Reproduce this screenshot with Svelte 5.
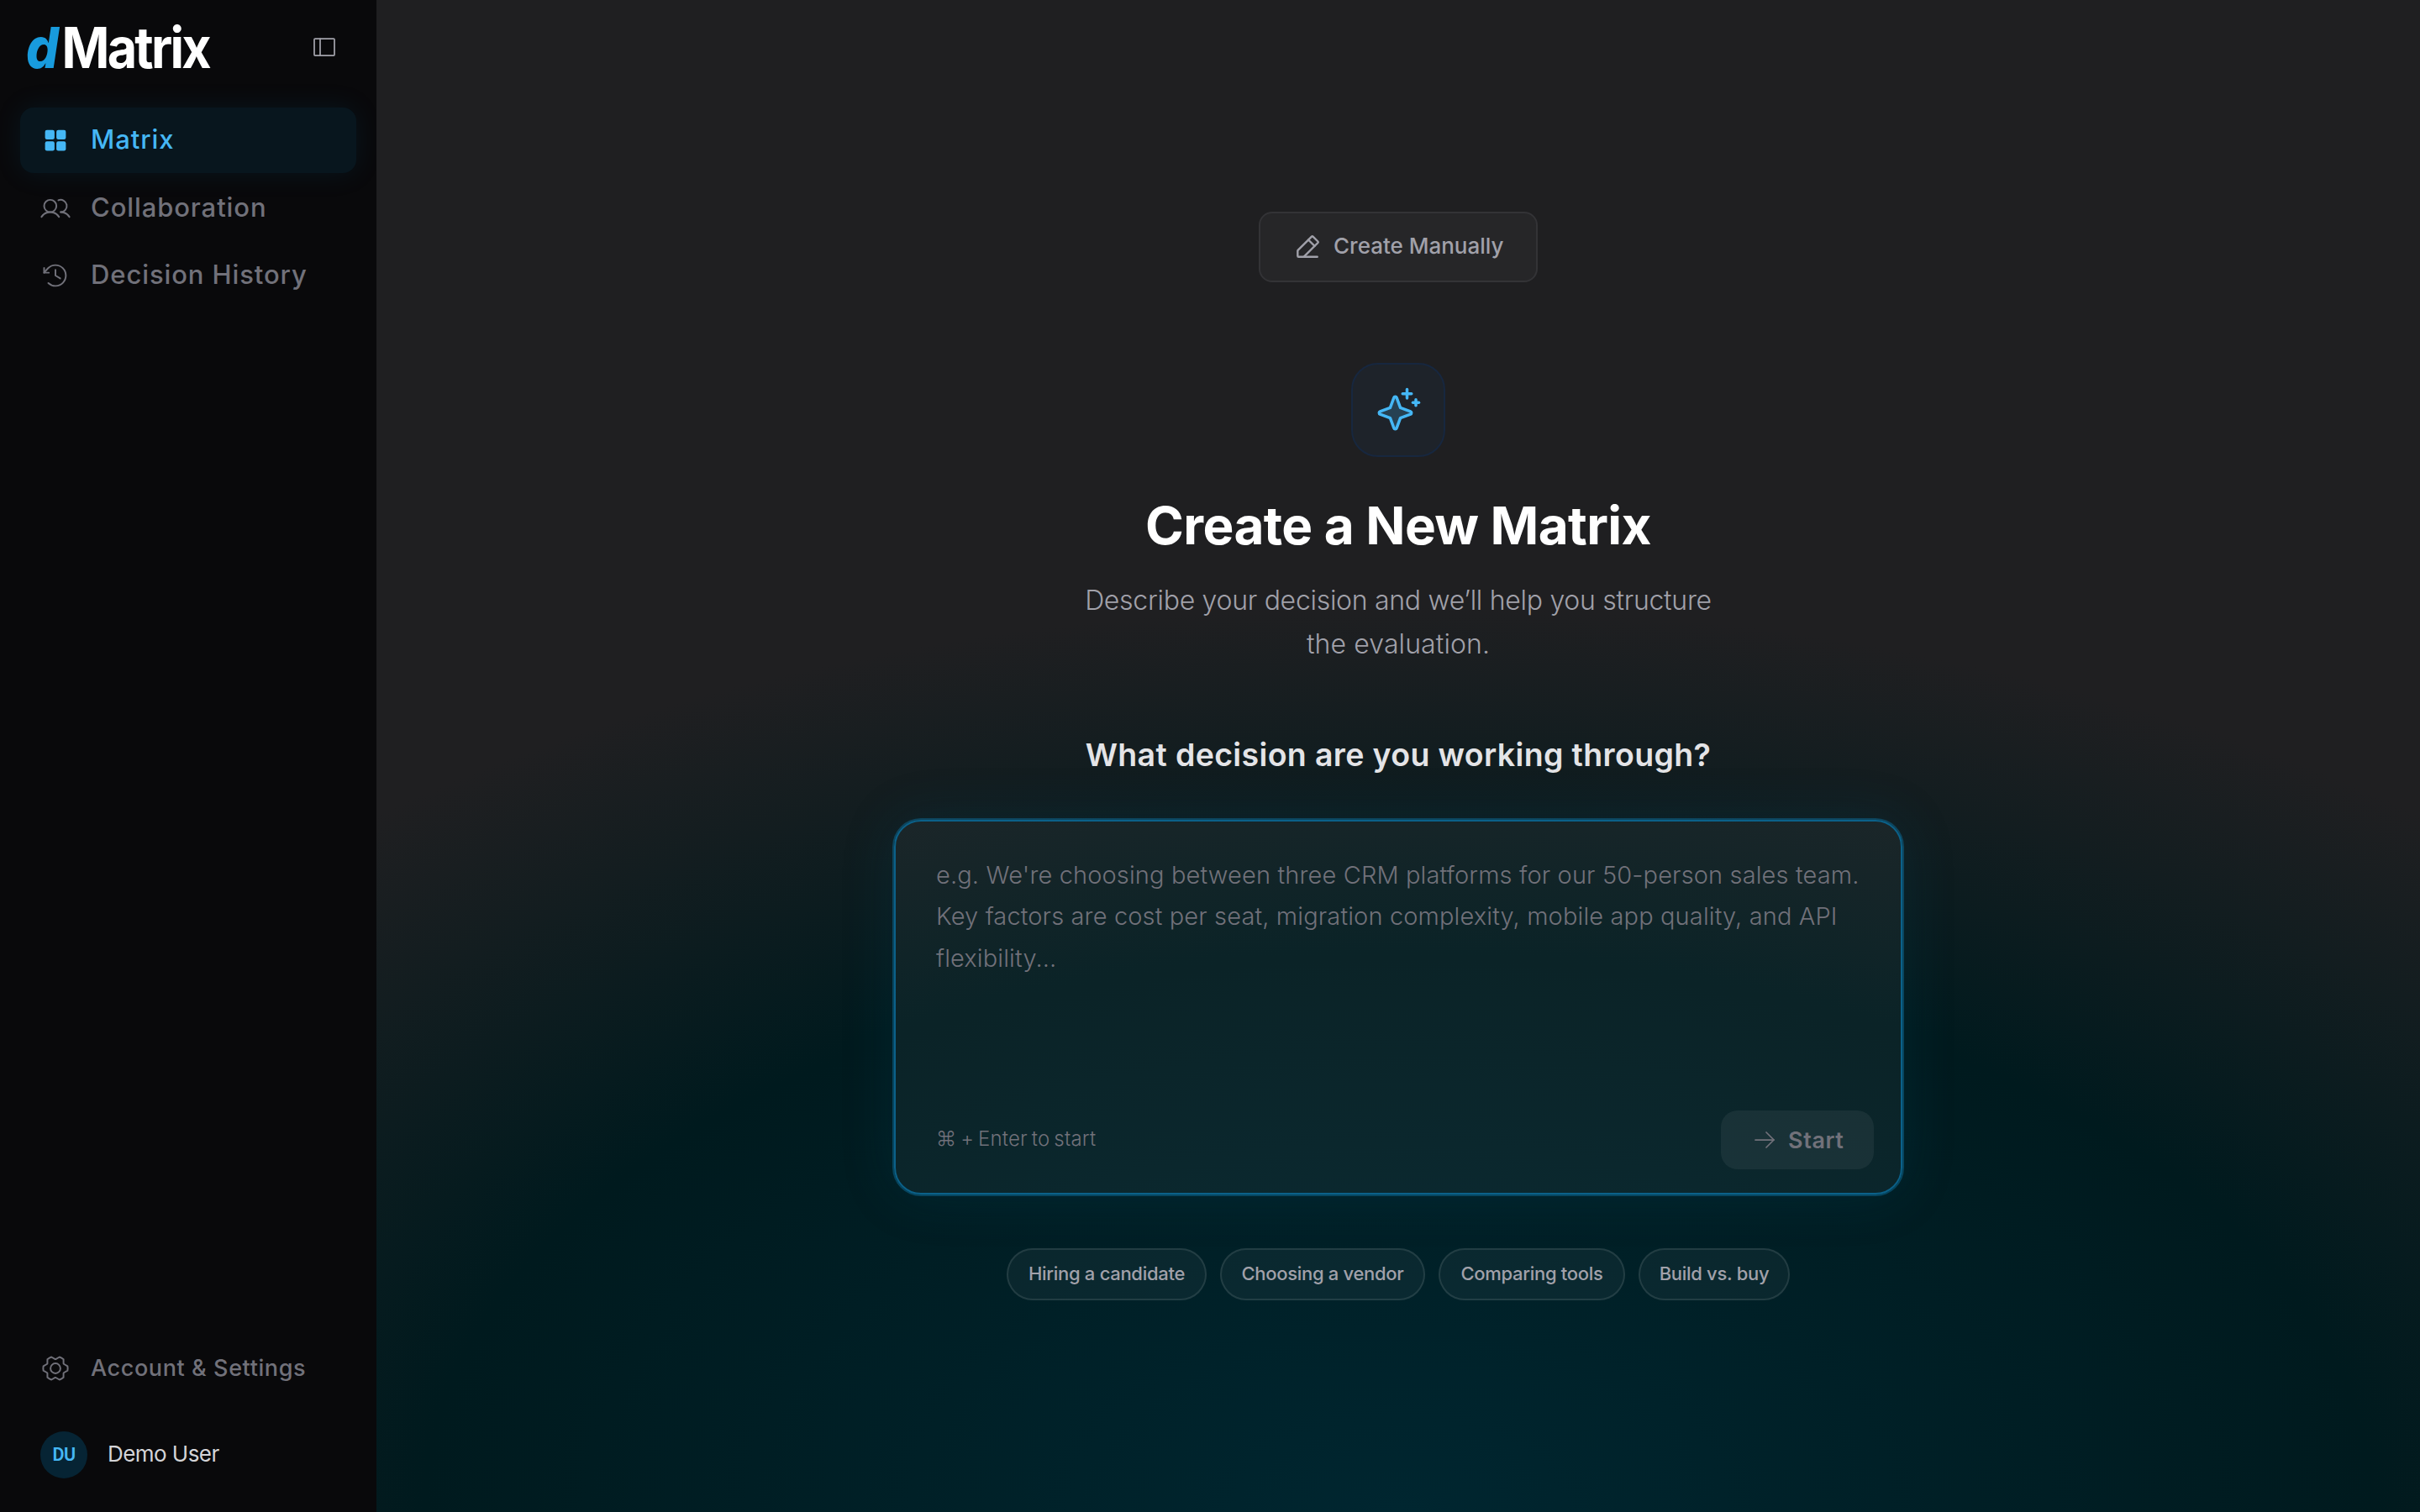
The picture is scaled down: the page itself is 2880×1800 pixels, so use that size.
<script lang="ts">
	const nav = [
		{ label: 'Matrix', icon: 'grid', active: true },
		{ label: 'Collaboration', icon: 'users', active: false },
		{ label: 'Decision History', icon: 'history', active: false }
	];

	const suggestions = [
		{ label: 'Hiring a candidate', width: 238 },
		{ label: 'Choosing a vendor', width: 244 },
		{ label: 'Comparing tools', width: 222 },
		{ label: 'Build vs. buy', width: 180 }
	];

	const placeholder = [
		"e.g. We're choosing between three CRM platforms for our 50-person sales team.",
		'Key factors are cost per seat, migration complexity, mobile app quality, and API',
		'flexibility...'
	];
</script>

<div class="app">
	<aside>
		<header>
			<svg class="logo" width="216" height="60" viewBox="0 0 216 60" aria-label="dMatrix">
				<text x="-1" y="55" textLength="218" lengthAdjust="spacingAndGlyphs"><tspan class="logo-d">d</tspan><tspan dx="4">Matrix</tspan></text>
			</svg>
			<svg class="toggle" width="32" height="32" viewBox="0 0 256 256">
				<rect x="32" y="48" width="192" height="160" rx="8" />
				<line x1="88" y1="48" x2="88" y2="208" />
			</svg>
		</header>

		<nav>
			{#each nav as item}
				<div class="item" class:active={item.active}>
					<svg width="36" height="36" viewBox="0 0 256 256">
						{#if item.icon === 'grid'}
							<g class="solid">
								<rect x="40" y="40" width="80" height="80" rx="16" />
								<rect x="136" y="40" width="80" height="80" rx="16" />
								<rect x="40" y="136" width="80" height="80" rx="16" />
								<rect x="136" y="136" width="80" height="80" rx="16" />
							</g>
						{:else if item.icon === 'users'}
							<circle cx="84" cy="108" r="52" />
							<path d="M10.23,200a88,88,0,0,1,147.54,0" />
							<path d="M172,160a87.93,87.93,0,0,1,73.77,40" />
							<path d="M152.69,59.7A52,52,0,1,1,172,160" />
						{:else}
							<polyline points="128 80 128 128 168 152" />
							<polyline points="72 104 32 104 32 64" />
							<path d="M67.6,192A88,88,0,1,0,65.77,65.77C54,77.69,44.28,88.93,32,104" />
						{/if}
					</svg>
					<span>{item.label}</span>
				</div>
			{/each}
		</nav>

		<footer>
			<div class="item settings">
				<svg width="36" height="36" viewBox="0 0 256 256">
					<circle cx="128" cy="128" r="42" />
					<path
						d="M130.05,206.11c-1.34,0-2.69,0-4,0L94,224a104.61,104.61,0,0,1-34.11-19.2l-.12-36c-.71-1.12-1.38-2.25-2-3.41L25.9,147.24a99.15,99.15,0,0,1,0-38.46l31.84-18.1c.65-1.15,1.32-2.29,2-3.41l.16-36A104.58,104.58,0,0,1,94,32l32,17.89c1.34,0,2.69,0,4,0L162,32a104.61,104.61,0,0,1,34.11,19.2l.12,36c.71,1.12,1.38,2.25,2,3.41l31.85,18.14a99.15,99.15,0,0,1,0,38.46l-31.84,18.1c-.65,1.15-1.32,2.29-2,3.41l-.16,36A104.58,104.58,0,0,1,162,224Z"
					/>
				</svg>
				<span>Account &amp; Settings</span>
			</div>
			<div class="user">
				<div class="avatar">DU</div>
				<span>Demo User</span>
			</div>
		</footer>
	</aside>

	<main>
		<button class="manual">
			<svg width="34" height="34" viewBox="0 0 256 256">
				<path d="M96,216H48a8,8,0,0,1-8-8V163.31a8,8,0,0,1,2.34-5.65L165.66,34.34a8,8,0,0,1,11.31,0L221.66,79a8,8,0,0,1,0,11.31Z" />
				<line x1="216" y1="216" x2="96" y2="216" />
				<line x1="136" y1="64" x2="192" y2="120" />
			</svg>
			<span>Create Manually</span>
		</button>

		<div class="badge">
			<svg width="56" height="56" viewBox="0 0 256 256">
				<path
					class="tint"
					d="M194.82,151.43l-55.09,20.3-20.3,55.09a7.92,7.92,0,0,1-14.86,0l-20.3-55.09-55.09-20.3a7.92,7.92,0,0,1,0-14.86l55.09-20.3,20.3-55.09a7.92,7.92,0,0,1,14.86,0l20.3,55.09,55.09,20.3A7.92,7.92,0,0,1,194.82,151.43Z"
				/>
				<line x1="176" y1="16" x2="176" y2="64" />
				<line x1="152" y1="40" x2="200" y2="40" />
				<line x1="224" y1="72" x2="224" y2="104" />
				<line x1="208" y1="88" x2="240" y2="88" />
			</svg>
		</div>

		<h1>Create a New Matrix</h1>
		<p class="lead">
			Describe your decision and we’ll help you structure<br />
			<span class="lead-end">the evaluation.</span>
		</p>

		<h2>What decision are you working through?</h2>

		<section class="prompt">
			<div class="placeholder">
				{#each placeholder as line}
					<div>{line}</div>
				{/each}
			</div>
			<div class="actions">
				<span class="hint">⌘ + Enter to start</span>
				<button class="start">
					<svg width="32" height="32" viewBox="0 0 256 256">
						<line x1="40" y1="128" x2="216" y2="128" />
						<polyline points="144 56 216 128 144 200" />
					</svg>
					<span>Start</span>
				</button>
			</div>
		</section>

		<div class="chips">
			{#each suggestions as s}
				<button class="chip" style="width: {s.width}px">{s.label}</button>
			{/each}
		</div>
	</main>
</div>

<style>
	:global(body) {
		background: #09090b;
	}

	.app {
		display: flex;
		width: 2880px;
		height: 1800px;
		overflow: hidden;
		font-family: Inter, 'Liberation Sans', sans-serif;
	}

	button {
		font-family: inherit;
		border: none;
	}

	svg {
		display: block;
		flex: none;
		fill: none;
		stroke: currentColor;
		stroke-width: 14;
		stroke-linecap: round;
		stroke-linejoin: round;
	}

	span,
	div {
		white-space: nowrap;
	}

	aside {
		width: 448px;
		box-sizing: border-box;
		flex: none;
		display: flex;
		flex-direction: column;
		padding: 26px 24px 40px;
		background: #09090b;
		color: #71717a;
	}

	header {
		display: flex;
		justify-content: space-between;
		align-items: flex-start;
		height: 102px;
		padding: 0 22px 0 8px;
	}

	.logo {
		overflow: visible;
		stroke: none;
		fill: #fff;
		font-weight: 750;
		font-size: 67px;
		letter-spacing: -3px;
	}

	.logo-d {
		fill: #189bdd;
		font-style: italic;
		font-weight: 850;
		letter-spacing: 0;
	}

	.toggle {
		margin-top: 14px;
		color: #a1a1aa;
	}

	nav {
		display: flex;
		flex-direction: column;
		gap: 2.5px;
	}

	.item {
		display: flex;
		align-items: center;
		gap: 24px;
		height: 78px;
		padding: 0 24px;
		border-radius: 16px;
		font-size: 31px;
		font-weight: 500;
		letter-spacing: 0.9px;
	}

	.item span {
		padding-bottom: 3px;
	}

	.item.active {
		color: #45b7f5;
		background: #08161e;
		box-shadow: 0 0 32px rgba(14, 116, 164, 0.12);
	}

	.solid {
		fill: currentColor;
		stroke: none;
	}

	footer {
		margin-top: auto;
	}

	.item.settings {
		font-size: 27px;
		font-weight: 550;
		letter-spacing: 0.6px;
	}

	.settings span {
		padding-bottom: 1px;
	}

	.user {
		display: flex;
		align-items: center;
		gap: 24px;
		margin-top: 36px;
		padding: 0 24px;
		color: #d4d4d8;
		font-size: 26px;
		letter-spacing: -0.55px;
	}

	.user > span {
		padding-bottom: 3px;
	}

	.avatar {
		width: 56px;
		height: 56px;
		border-radius: 50%;
		text-align: center;
		background: #062434;
		color: #45b7f5;
		font: 600 21.5px/56px Roboto, sans-serif;
	}

	main {
		flex: 1;
		display: flex;
		flex-direction: column;
		align-items: center;
		padding-top: 252px;
		background: radial-gradient(ellipse 1900px 1080px at 50% 100%, #002630 0%, #001a1e 61%, #1f1f21 100%);
	}

	.manual {
		display: flex;
		align-items: center;
		gap: 14px;
		box-sizing: border-box;
		width: 332px;
		height: 84px;
		padding: 0 39px;
		border: 2px solid #333336;
		border-radius: 16px;
		background: #262628;
		color: #a1a1aa;
		font-size: 26px;
		font-weight: 500;
	}

	.manual span {
		padding-bottom: 3px;
	}

	.manual svg {
		stroke-width: 18;
	}

	.badge svg {
		stroke-width: 16;
	}

	.badge {
		display: flex;
		align-items: center;
		justify-content: center;
		box-sizing: border-box;
		width: 112px;
		height: 112px;
		margin-top: 96px;
		border: 2px solid #17273f;
		border-radius: 32px;
		background: #1e232a;
		color: #45b7f5;
	}

	.tint {
		fill: rgba(69, 183, 245, 0.2);
	}

	h1 {
		margin: 46px 0 0;
		font-size: 62px;
		line-height: 72px;
		font-weight: 700;
		letter-spacing: -0.6px;
		color: #fff;
	}

	.lead {
		margin: 27px 0 0;
		text-align: center;
		font-size: 32px;
		line-height: 52px;
		font-weight: 300;
		letter-spacing: -0.29px;
		color: #a1a1aa;
	}

	.lead-end {
		letter-spacing: 0.1px;
	}

	h2 {
		margin: 84px 0 0;
		font-size: 37.5px;
		line-height: 44px;
		font-weight: 600;
		letter-spacing: 0.35px;
		color: #e4e4e7;
	}

	.prompt {
		display: flex;
		flex-direction: column;
		box-sizing: border-box;
		width: 1200px;
		height: 446px;
		margin-top: 55px;
		padding: 39px 32px 28px 48px;
		border: 2px solid #0b6189;
		border-radius: 32px;
		background: rgba(255, 255, 255, 0.045);
		box-shadow:
			0 0 0 2px rgba(14, 116, 164, 0.45),
			0 0 64px rgba(2, 90, 120, 0.18);
	}

	.placeholder {
		font-size: 29px;
		line-height: 49.3px;
		font-weight: 350;
		letter-spacing: 0.13px;
		color: #71717a;
	}

	.actions {
		display: flex;
		justify-content: space-between;
		align-items: center;
		margin-top: auto;
		color: #71717a;
	}

	.hint {
		padding-bottom: 3px;
		font-size: 24px;
		font-weight: 300;
		letter-spacing: 0.2px;
		word-spacing: -2px;
	}

	.start {
		display: flex;
		align-items: center;
		gap: 12px;
		box-sizing: border-box;
		width: 182px;
		height: 70px;
		padding: 0 36px;
		border-radius: 20px;
		background: rgba(255, 255, 255, 0.06);
		color: #71717a;
		font-size: 27px;
		font-weight: 600;
		letter-spacing: 0.6px;
	}

	.chips {
		display: flex;
		gap: 16px;
		margin-top: 64px;
	}

	.chip {
		box-sizing: border-box;
		height: 62px;
		padding: 0 0 2px;
		border: 2px solid rgba(255, 255, 255, 0.1);
		border-radius: 31px;
		background: rgba(255, 255, 255, 0.04);
		color: #a1a1aa;
		font-size: 22px;
		font-weight: 450;
		letter-spacing: -0.3px;
	}
</style>
